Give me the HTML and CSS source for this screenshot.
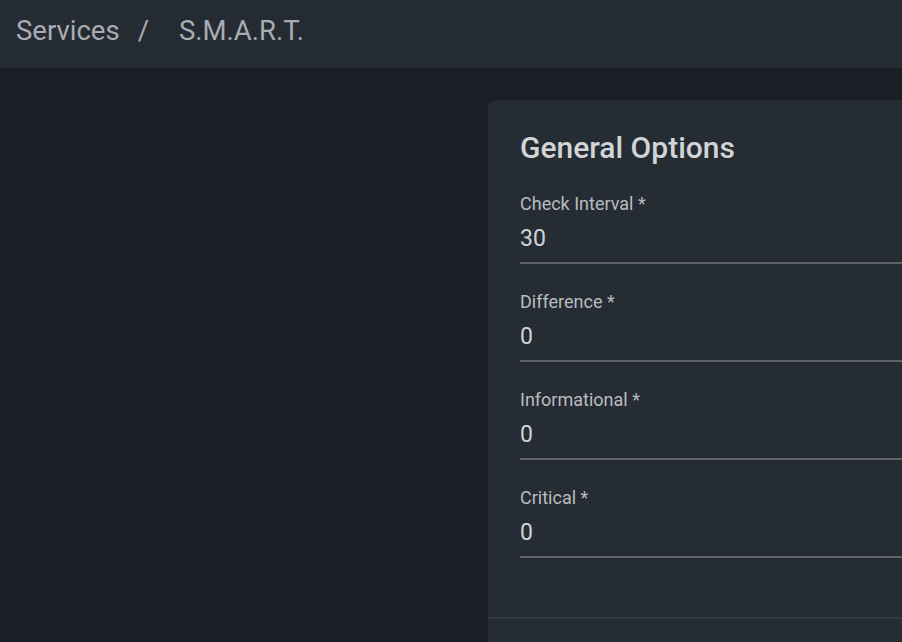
FILE: index.html
```html
<!DOCTYPE html>
<html lang="en">
<head>
    <meta charset="UTF-8">
    <meta name="viewport" content="width=device-width, initial-scale=1.0">
    <title>S.M.A.R.T. - Services</title>
    <link rel="stylesheet" href="styles.css">
</head>
<body>
    <header class="topbar">
        <nav class="crumbs">
            <span class="crumb">Services</span>
            <span class="sep">/</span>
            <span class="crumb">S.M.A.R.T.</span>
        </nav>
    </header>

    <main class="content">
        <section class="card">
            <h2 class="card-title">General Options</h2>

            <div class="field">
                <label for="interval">Check Interval *</label>
                <input id="interval" type="text" value="30">
            </div>
            <div class="field">
                <label for="difference">Difference *</label>
                <input id="difference" type="text" value="0">
            </div>
            <div class="field">
                <label for="informational">Informational *</label>
                <input id="informational" type="text" value="0">
            </div>
            <div class="field">
                <label for="critical">Critical *</label>
                <input id="critical" type="text" value="0">
            </div>

            <div class="card-actions"></div>
        </section>
    </main>
</body>
</html>
```

FILE: styles.css
```css
* {
    box-sizing: border-box;
}

html, body {
    margin: 0;
    height: 100%;
}

body {
    display: flex;
    flex-direction: column;
    background: #1a1f26;
    font-family: Roboto, "Noto Sans", sans-serif;
    overflow: hidden;
}

.topbar {
    height: 68px;
    flex-shrink: 0;
    background: #252b33;
    display: flex;
    align-items: center;
    padding: 0 16px;
}

.crumbs {
    display: flex;
    align-items: center;
    font-size: 27.5px;
    color: #a9acb0;
    padding-bottom: 8px;
}

.sep {
    margin: 0 30px 0 18px;
}

.content {
    flex: 1;
    display: flex;
    padding: 32px 0 0 488px;
}

.card {
    flex: 1;
    background: #262c34;
    border-radius: 8px 0 0 0;
    padding: 30px 0 0 32px;
}

.card-title {
    margin: 0 0 28px;
    font-size: 30px;
    line-height: 36px;
    font-weight: 500;
    color: #d2d4d6;
}

.field {
    display: flex;
    flex-direction: column;
    margin-bottom: 28px;
}

.field label {
    font-size: 18px;
    line-height: 20px;
    color: #b9bcbf;
    margin-bottom: 10px;
}

.field input {
    width: 100%;
    height: 40px;
    background: transparent;
    border: 0;
    border-bottom: 2px solid #5e6369;
    color: #d0d2d5;
    font-family: inherit;
    font-size: 23px;
    line-height: 28px;
    padding: 0 0 10px;
    outline: none;
}

.card-actions {
    margin: 59px 0 0 -32px;
    border-top: 2px solid #353b43;
    height: 40px;
}
```
